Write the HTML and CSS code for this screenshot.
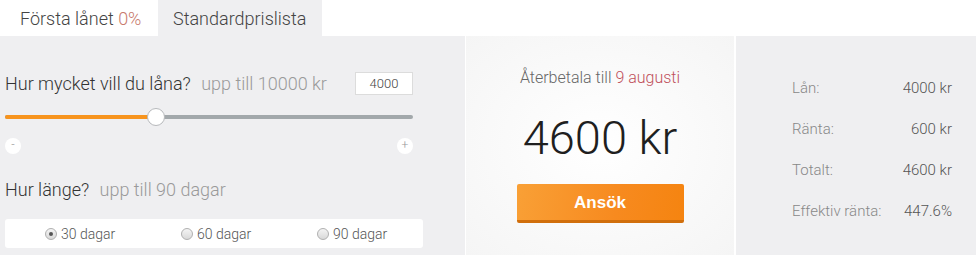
FILE: index.html
```html
<!DOCTYPE html>
<html lang="sv">
<head>
<meta charset="utf-8">
<link rel="stylesheet" href="styles.css">
</head>
<body>
<div class="tabs">
  <div class="tab">Första lånet <span class="accent">0%</span></div>
  <div class="tab active">Standardprislista</div>
</div>
<div class="calc">
  <div class="left">
    <div class="q-row">
      <div class="q">Hur mycket vill du låna? <span class="hint">upp till 10000 kr</span></div>
      <div class="amount">4000</div>
    </div>
    <div class="slider">
      <div class="track"><div class="fill" style="width:37%"></div></div>
      <div class="thumb" style="left:37%"></div>
    </div>
    <div class="pm">
      <span class="pmbtn">-</span>
      <span class="pmbtn">+</span>
    </div>
    <div class="q q2">Hur länge? <span class="hint">upp till 90 dagar</span></div>
    <div class="radios">
      <label class="opt"><span class="radio checked"></span>30 dagar</label>
      <label class="opt"><span class="radio"></span>60 dagar</label>
      <label class="opt"><span class="radio"></span>90 dagar</label>
    </div>
  </div>
  <div class="mid">
    <div class="due">Återbetala till <span class="date">9 augusti</span></div>
    <div class="total">4600 kr</div>
    <div class="apply">Ansök</div>
  </div>
  <div class="right">
    <div class="row"><span class="lbl">Lån:</span><span class="val">4000 kr</span></div>
    <div class="row"><span class="lbl">Ränta:</span><span class="val">600 kr</span></div>
    <div class="row"><span class="lbl">Totalt:</span><span class="val">4600 kr</span></div>
    <div class="row"><span class="lbl">Effektiv ränta:</span><span class="val">447.6%</span></div>
  </div>
</div>
</body>
</html>
```
FILE: styles.css
```css
html, body { margin: 0; padding: 0; background: #ffffff; }
body { font-family: Roboto, "Liberation Sans", sans-serif; font-weight: 300; color: #333; width: 976px; height: 255px; overflow: hidden; }

.tabs { display: flex; height: 36px; }
.tab { box-sizing: border-box; width: 158px; padding-left: 20px; line-height: 38px; font-size: 18px; color: #444; font-weight: 300; white-space: nowrap; }
.tab.active { background: #efeff1; width: 164px; padding-left: 15px; }
.accent { color: #c87a6c; }

.calc { display: flex; background: #efeff1; height: 219px; }

.left { width: 460px; padding: 35px 0 0 5px; }
.q-row { display: flex; align-items: center; justify-content: space-between; height: 24px; width: 408px; }
.q { font-size: 18px; color: #333; white-space: nowrap; }
.hint { color: #9a9a9a; margin-left: 6px; }
.amount { width: 56px; height: 21px; background: #fff; border: 1px solid #dcdcdc; font-size: 13px; line-height: 21px; text-align: center; color: #444; font-weight: 300; }

.slider { position: relative; width: 408px; height: 18px; margin-top: 13px; }
.track { position: absolute; left: 0; right: 0; top: 7px; height: 4px; border-radius: 2px; background: #a2a8ab; }
.fill { height: 100%; border-radius: 2px; background: #f7941e; }
.thumb { position: absolute; top: 0; width: 16px; height: 16px; margin-left: -9px; border-radius: 50%; background: #fff; border: 1px solid #b7b9bc; }

.pm { display: flex; justify-content: space-between; width: 408px; margin-top: 12px; }
.pmbtn { width: 16px; height: 16px; border-radius: 50%; background: #fff; color: #999; font-size: 12px; line-height: 15px; text-align: center; }

.q2 { margin-top: 24px; height: 24px; line-height: 24px; }

.radios { box-sizing: border-box; display: flex; align-items: center; width: 418px; height: 29px; margin-top: 17px; background: #fff; border-radius: 3px; padding-left: 40px; }
.opt { flex: none; width: 136px; display: flex; align-items: center; font-size: 14px; color: #555; font-weight: 300; gap: 4px; }
.opt:last-child { width: auto; }
.radio { width: 10px; height: 10px; border-radius: 50%; border: 1px solid #b0b0b0; background: linear-gradient(#f4f4f4, #d9d9d9); position: relative; }
.radio.checked::after { content: ""; position: absolute; left: 3px; top: 3px; width: 4px; height: 4px; border-radius: 50%; background: #555; }

.mid { width: 268px; border-left: 1px solid #fff; border-right: 2px solid #fff; background: radial-gradient(ellipse at 50% 50%, #ffffff 0%, #fafafa 50%, #f5f5f5 100%); display: flex; flex-direction: column; align-items: center; }
.due { margin-top: 32px; font-size: 16px; line-height: 20px; color: #666; font-weight: 300; }
.date { color: #c0505a; }
.total { margin-top: 22px; font-size: 47px; color: #1f1f1f; font-weight: 300; line-height: 56px; }
.apply { margin-top: 18px; width: 167px; height: 36px; line-height: 37px; text-align: center; font-family: "Liberation Sans", Arial, sans-serif; font-weight: 700; font-size: 17px; color: #fff; background: linear-gradient(100deg, #f9a036 0%, #f78a1f 60%, #f58410 100%); border-bottom: 3px solid #d16f0c; border-radius: 2px; }

.right { flex: 1; padding: 40px 24px 0 56px; }
.row { display: flex; justify-content: space-between; height: 41px; line-height: 24px; font-size: 15px; }
.lbl { color: #888; }
.val { color: #555; }
```
